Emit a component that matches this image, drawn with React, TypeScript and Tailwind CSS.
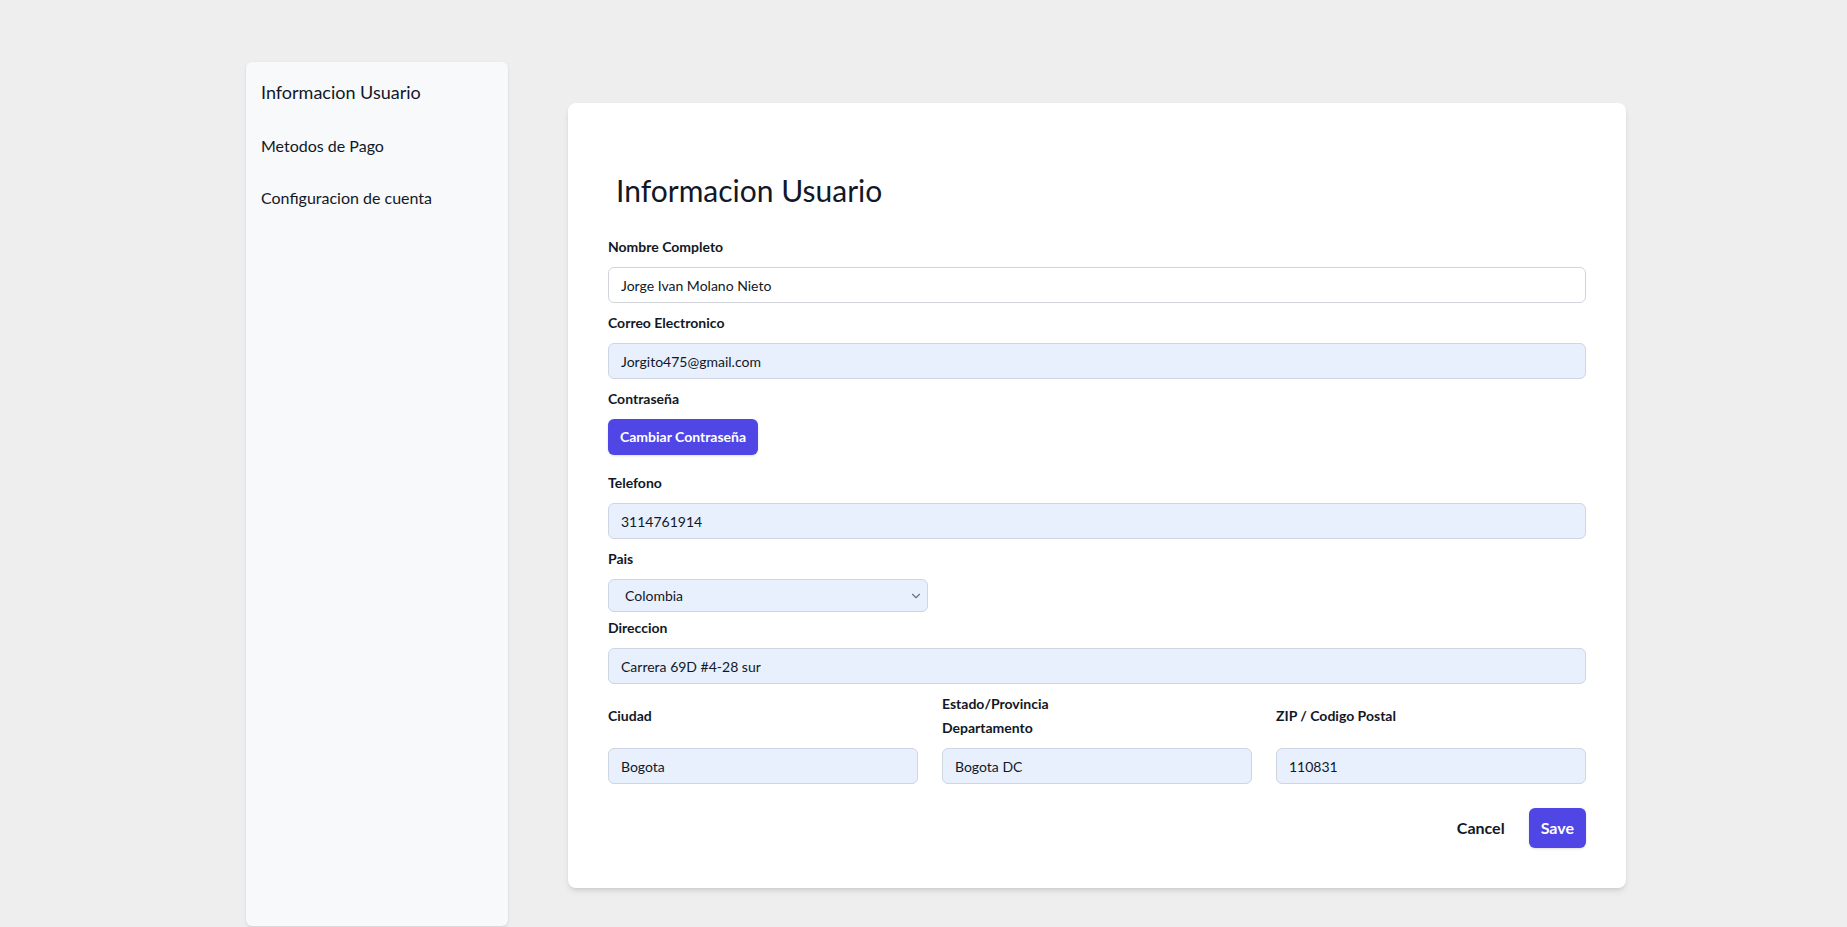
import { FC, ReactNode } from 'react'
import { ChevronDown } from 'lucide-react'

const font = { fontFamily: '"Segoe UI", Lato, "Noto Sans", sans-serif' }

const Label: FC<{ children: ReactNode; htmlFor?: string }> = ({ children, htmlFor }) => (
    <label htmlFor={htmlFor} className="block text-sm font-bold leading-6 text-[#111827]">
        {children}
    </label>
)

interface FieldProps {
    id: string
    value: string
    autofill?: boolean
}

const TextInput: FC<FieldProps> = ({ id, value, autofill = true }) => (
    <input
        id={id}
        type="text"
        defaultValue={value}
        className={
            'block h-9 w-full rounded-md border px-3 text-sm text-[#111827] outline-none ' +
            (autofill ? 'border-[#cfd6e2] bg-[#e8f0fe]' : 'border-[#d1d5db] bg-white')
        }
    />
)

const sidebarItems = ['Metodos de Pago', 'Configuracion de cuenta']

export default function App() {
    return (
        <div className="flex h-screen gap-[60px] bg-[#eeeeee] pb-px pl-[246px] pt-[62px]" style={font}>
            <aside className="flex w-[262px] flex-col gap-7 rounded-md bg-[#f8f9fb] px-[15px] pt-4 shadow-sm">
                <a className="text-lg leading-7 text-[#111827]">Informacion Usuario</a>
                {sidebarItems.map((item) => (
                    <a key={item} className="text-base leading-6 text-[#111827]">
                        {item}
                    </a>
                ))}
            </aside>

            <main className="mt-[41px] self-start">
                <div className="w-[1058px] rounded-lg bg-white px-10 pb-10 pt-[69px] shadow-md">
                    <h2 className="pl-2 text-3xl leading-9 text-[#111827]">Informacion Usuario</h2>

                    <form className="mt-[27px]" onSubmit={(e) => e.preventDefault()}>
                        <Label htmlFor="nombre">Nombre Completo</Label>
                        <div className="mt-2">
                            <TextInput id="nombre" value="Jorge Ivan Molano Nieto" autofill={false} />
                        </div>

                        <div className="mt-2">
                            <Label htmlFor="correo">Correo Electronico</Label>
                        </div>
                        <div className="mt-2">
                            <TextInput id="correo" value="Jorgito475@gmail.com" />
                        </div>

                        <div className="mt-2">
                            <Label>Contraseña</Label>
                        </div>
                        <button
                            type="button"
                            className="mt-2 h-9 rounded-md bg-[#4f46e5] px-3 text-sm font-bold text-white shadow-sm"
                        >
                            Cambiar Contraseña
                        </button>

                        <div className="mt-4">
                            <Label htmlFor="telefono">Telefono</Label>
                        </div>
                        <div className="mt-2">
                            <TextInput id="telefono" value="3114761914" />
                        </div>

                        <div className="mt-2">
                            <Label htmlFor="pais">Pais</Label>
                        </div>
                        <div className="relative mt-2 w-80">
                            <select
                                id="pais"
                                defaultValue="Colombia"
                                className="block h-[33px] w-full appearance-none rounded-md border border-[#cfd6e2] bg-[#e8f0fe] pl-4 pr-8 text-sm text-[#111827] outline-none"
                            >
                                <option>Colombia</option>
                                <option>Mexico</option>
                                <option>Peru</option>
                            </select>
                            <ChevronDown
                                size={14}
                                strokeWidth={2}
                                className="pointer-events-none absolute right-[5px] top-[10px] text-[#6b7280]"
                            />
                        </div>

                        <div className="mt-1">
                            <Label htmlFor="direccion">Direccion</Label>
                        </div>
                        <div className="mt-2">
                            <TextInput id="direccion" value="Carrera 69D #4-28 sur" />
                        </div>

                        <div className="mt-2 grid grid-cols-3 gap-x-6 gap-y-2">
                            <div className="self-center">
                                <Label htmlFor="ciudad">Ciudad</Label>
                            </div>
                            <div className="self-center">
                                <Label htmlFor="estado">
                                    Estado/Provincia
                                    <br />
                                    Departamento
                                </Label>
                            </div>
                            <div className="self-center">
                                <Label htmlFor="zip">ZIP / Codigo Postal</Label>
                            </div>
                            <TextInput id="ciudad" value="Bogota" />
                            <TextInput id="estado" value="Bogota DC" />
                            <TextInput id="zip" value="110831" />
                        </div>

                        <div className="mt-6 flex items-center justify-end gap-x-6">
                            <button type="button" className="text-base font-bold leading-6 text-[#111827]">
                                Cancel
                            </button>
                            <button
                                type="submit"
                                className="rounded-md bg-[#4f46e5] px-3 py-2 text-base font-bold leading-6 text-white shadow-sm"
                            >
                                Save
                            </button>
                        </div>
                    </form>
                </div>
            </main>
        </div>
    )
}
